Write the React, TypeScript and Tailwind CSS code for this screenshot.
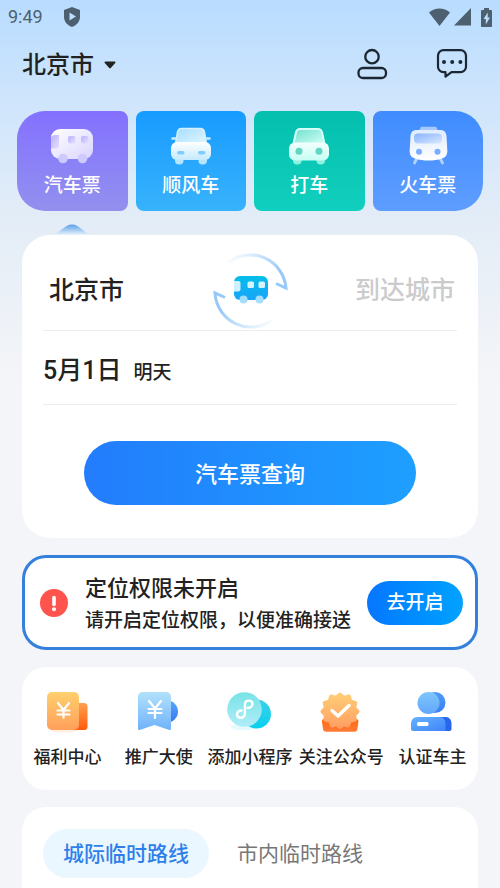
import { useState, type ReactNode } from 'react';

const rides = [
  { label: '汽车票', icon: <BusIcon />, className: 'from-[#8470ff] to-[#9290ee] rounded-l-[28px] rounded-r-lg' },
  { label: '顺风车', icon: <CarIcon />, className: 'from-[#169bff] to-[#37b2fb] rounded-lg' },
  { label: '打车', icon: <TaxiIcon />, className: 'from-[#04bfae] to-[#11cfbe] rounded-lg' },
  { label: '火车票', icon: <TrainIcon />, className: 'from-[#3f8cff] to-[#5e9dff] rounded-l-lg rounded-r-[28px]' },
];

const services = [
  { label: '福利中心', icon: <WelfareIcon /> },
  { label: '推广大使', icon: <AmbassadorIcon /> },
  { label: '添加小程序', icon: <MiniProgramIcon /> },
  { label: '关注公众号', icon: <FollowIcon /> },
  { label: '认证车主', icon: <DriverIcon /> },
];

const routeTabs = ['城际临时路线', '市内临时路线'];

export default function App() {
  const [ride, setRide] = useState(0);
  const [tab, setTab] = useState(0);

  return (
    <div className="flex min-h-screen flex-col bg-[#f4f5f8] bg-[linear-gradient(180deg,#b8dcff_0px,#cfe5fc_100px,#e4edf7_225px,#f4f5f8_380px)] font-['Roboto','Noto_Sans_CJK_SC',sans-serif] text-[#222]">
      <StatusBar />

      <header className="flex h-[60px] items-center justify-between pr-8 pl-[22px]">
        <button className="flex items-center gap-2.5 pt-0.5 text-2xl font-medium">
          北京市
          <svg className="h-2 w-3" viewBox="0 0 12 8" fill="currentColor">
            <path d="M1.5.5h9c1 0 1.3.9.7 1.6L7 6.7c-.6.7-1.4.7-2 0L.8 2.1C.2 1.4.5.5 1.5.5Z" />
          </svg>
        </button>
        <div className="flex items-center gap-12">
          <button aria-label="我的">
            <svg className="h-8 w-8" viewBox="0 0 32 32" fill="none" stroke="#1b2733" strokeWidth={2.3}>
              <circle cx="16" cy="8.7" r="6.7" />
              <rect x="2.5" y="20" width="27.5" height="10" rx="4.5" />
            </svg>
          </button>
          <button aria-label="消息">
            <svg className="h-8 w-8" viewBox="0 0 32 32" fill="none" stroke="#1b2733" strokeWidth={2.2} strokeLinejoin="round">
              <path d="M7.5 2.2h17A5.5 5.5 0 0 1 30 7.7v11a5.5 5.5 0 0 1-5.500 5.500H15.500L9.500 28.700v-4.500h-2A5.500 5.500 0 0 1 2 18.700v-11a5.500 5.500 0 0 1 5.500-5.500Z" />
              <g fill="#1b2733" stroke="none">
                <circle cx="8" cy="14" r="2" />
                <circle cx="16.2" cy="14" r="2" />
                <circle cx="24.4" cy="14" r="2" />
              </g>
            </svg>
          </button>
        </div>
      </header>

      <nav className="mt-[17px] grid grid-cols-4 gap-2 px-[17px]">
        {rides.map((item, i) => (
          <div key={item.label} className="relative">
            <button
              onClick={() => setRide(i)}
              className={`flex h-[100px] w-full flex-col items-center bg-linear-to-b pt-[15px] text-[19px] font-medium text-white ${item.className}`}
            >
              {item.icon}
              <span className="mt-1.5 leading-7">{item.label}</span>
            </button>
            {ride === i && (
              <svg className="absolute top-full left-1/2 mt-3 h-3 w-9 -translate-x-1/2" viewBox="0 0 36 12">
                <path d="M0 11C7 9 11 1.500 18 1.500S29 9 36 11Z" fill="url(#pointer)" />
                <Gradient id="pointer" from="#5b9fea" to="#dcebfa" />
              </svg>
            )}
          </div>
        ))}
      </nav>

      <main className="mt-6 flex grow flex-col gap-[17px] px-[22px]">
        <section className="rounded-[28px] bg-white px-[21px] pb-[33px]">
          <div className="flex h-24 items-center justify-between border-b border-[#ececec] pt-4">
            <button className="w-[110px] pl-1.5 text-left text-[25px] font-medium">北京市</button>
            <button aria-label="交换城市">
              <SwapIcon />
            </button>
            <button className="w-[110px] pr-0.5 text-right text-[25px] font-medium whitespace-nowrap text-[#cbcbcb]">
              到达城市
            </button>
          </div>
          <button className="flex h-[74px] w-full items-baseline gap-3 border-b border-[#ececec] pt-5 font-medium">
            <span className="text-[25px] leading-10">5月1日</span>
            <span className="text-[19px]">明天</span>
          </button>
          <button className="mx-auto mt-9 block h-16 w-4/5 rounded-full bg-linear-to-r from-[#237cfc] to-[#1e9fff] pt-0.5 text-[22px] font-medium text-white">
            汽车票查询
          </button>
        </section>

        <section className="flex h-[95px] items-center rounded-[24px] border-[3px] border-[#357fdd] bg-white pr-3 pl-[15px]">
          <svg className="h-7 w-7 shrink-0" viewBox="0 0 28 28">
            <circle cx="14" cy="14" r="14" fill="#ff544d" />
            <path d="M14 8.500v7" stroke="#fff" strokeWidth={3.6} strokeLinecap="round" />
            <circle cx="14" cy="20.3" r="2" fill="#fff" />
          </svg>
          <div className="ml-[17px] grow pt-1 whitespace-nowrap">
            <h2 className="text-[22px] leading-8 font-medium">定位权限未开启</h2>
            <p className="text-[19px] leading-8 font-medium">请开启定位权限，以便准确接送</p>
          </div>
          <button className="h-11 w-24 shrink-0 rounded-full bg-linear-to-r from-[#0876ff] to-[#04a2ff] pt-0.5 text-[19px] font-medium text-white">
            去开启
          </button>
        </section>

        <section className="grid grid-cols-5 rounded-[24px] bg-white pt-[22px] pb-5">
          {services.map((item) => (
            <button key={item.label} className="flex flex-col items-center text-[17px] font-medium whitespace-nowrap">
              {item.icon}
              <span className="mt-2.5 leading-[25px]">{item.label}</span>
            </button>
          ))}
        </section>

        <section className="grow rounded-t-[24px] bg-white px-[21px] pt-[22px] pb-2.5">
          <div className="flex gap-2">
            {routeTabs.map((label, i) => (
              <button
                key={label}
                onClick={() => setTab(i)}
                className={`h-[49px] rounded-full px-5 pt-0.5 text-[21px] ${
                  tab === i ? 'bg-[#ebf7ff] font-medium text-[#2f7fea]' : 'text-[#777]'
                }`}
              >
                {label}
              </button>
            ))}
          </div>
        </section>
      </main>
    </div>
  );
}

function StatusBar() {
  return (
    <div className="flex h-[34px] items-center px-2 text-lg text-[#4d6070]">
      <span>9:49</span>
      <svg className="ml-5 h-5 w-[18px]" viewBox="0 0 18 20" fill="currentColor">
        <path fillRule="evenodd" d="M9 0l8 3v7c0 4.500-3.500 8.500-8 10C4.500 18.500 1 14.500 1 10V3Zm-2.500 5.500v8l6.500-4Z" />
      </svg>
      <div className="ml-auto flex items-center gap-1">
        <svg className="h-[18px] w-[21px]" viewBox="0 0 21 18" fill="currentColor">
          <path d="M0 4.500C6-1 15-1 21 4.500L10.500 18Z" />
        </svg>
        <svg className="h-[18px] w-[17px]" viewBox="0 0 17 18" fill="currentColor">
          <path d="M17 0v17.500H0Z" />
        </svg>
        <svg className="ml-1.5 h-[19px] w-[11px]" viewBox="0 0 11 19" fill="currentColor">
          <path
            fillRule="evenodd"
            d="M3 0h5v2h2c.6 0 1 .4 1 1v15c0 .6-.4 1-1 1H1c-.6 0-1-.4-1-1V3c0-.6.4-1 1-1h2Zm3.700 4.500L2.500 11h2.300v5.500L9 9.500H6.700Z"
          />
        </svg>
      </div>
    </div>
  );
}

function Gradient({ id, from, to, diagonal = false }: { id: string; from: string; to: string; diagonal?: boolean }) {
  return (
    <defs>
      <linearGradient id={id} x1="0" y1="0" x2={diagonal ? 1 : 0} y2="1">
        <stop stopColor={from} />
        <stop offset="1" stopColor={to} />
      </linearGradient>
    </defs>
  );
}

function RideSvg({ children }: { children: ReactNode }) {
  return (
    <svg className="h-10 w-[50px] shrink-0" viewBox="0 0 50 40">
      {children}
    </svg>
  );
}

function BusIcon() {
  return (
    <RideSvg>
      <Gradient id="bus" from="#ffffff" to="#d9d4ff" diagonal />
      <Gradient id="busWindow" from="#b9b0fb" to="#e6e1ff" diagonal />
      <rect x="4" y="3" width="42" height="30" rx="9" fill="url(#bus)" />
      <path d="M4 13c0-3 2-4 4-4h4v11c0 1.500-1 2.500-2.500 2.500H4Z" fill="url(#busWindow)" />
      <rect x="21" y="10" width="7.5" height="7.5" rx="2" fill="url(#busWindow)" />
      <rect x="34" y="10" width="7.5" height="7.5" rx="2" fill="url(#busWindow)" />
      <circle cx="16" cy="32.5" r="4.8" fill="#cfcafd" />
      <circle cx="35.5" cy="32.5" r="4.8" fill="#cfcafd" />
    </RideSvg>
  );
}

function CarIcon() {
  return (
    <RideSvg>
      <Gradient id="carGlass" from="#a5deff" to="#e2f6ff" diagonal />
      <Gradient id="carBody" from="#ffffff" to="#c4eafe" />
      <path d="M6.500 12.500h5M38.500 12.500h5" stroke="#c5ebff" strokeWidth={2.6} strokeLinecap="round" />
      <path d="M9.500 18l2-12c.6-2.500 2-3.500 4-3.500h19c2 0 3.400 1 4 3.500l2 12Z" fill="url(#carGlass)" stroke="#d5f1ff" strokeWidth={1.5} />
      <rect x="9" y="28" width="8.5" height="10.5" rx="4" fill="#b5e5ff" />
      <rect x="32.5" y="28" width="8.5" height="10.5" rx="4" fill="#b5e5ff" />
      <rect x="5" y="16" width="40" height="18" rx="6" fill="url(#carBody)" />
      <rect x="11" y="25" width="7.5" height="3.6" rx="1.8" fill="#7dcdfa" />
      <rect x="32" y="25" width="7.5" height="3.6" rx="1.8" fill="#7dcdfa" />
    </RideSvg>
  );
}

function TaxiIcon() {
  return (
    <RideSvg>
      <Gradient id="taxiGlass" from="#6edfce" to="#d2fff5" diagonal />
      <Gradient id="taxiBody" from="#f4fffd" to="#c6fff4" />
      <path d="M9.500 18l2.300-11c.6-3 2.200-4 4.200-4h18c2 0 3.600 1 4.200 4l2.300 11Z" fill="url(#taxiGlass)" stroke="#d5fff8" strokeWidth={2} />
      <rect x="9" y="28" width="8.5" height="10.5" rx="4" fill="#8cf2df" />
      <rect x="32.5" y="28" width="8.5" height="10.5" rx="4" fill="#8cf2df" />
      <rect x="5" y="16.5" width="40" height="18" rx="6" fill="url(#taxiBody)" />
      <circle cx="15" cy="25.3" r="3.5" fill="#61d6c4" />
      <circle cx="35" cy="25.3" r="3.5" fill="#61d6c4" />
    </RideSvg>
  );
}

function TrainIcon() {
  return (
    <RideSvg>
      <Gradient id="train" from="#dfebff" to="#ffffff" />
      <Gradient id="trainGlass" from="#85b3ff" to="#dbe8ff" diagonal />
      <path d="M16 5l1.500-3.500c.3-.6.8-.8 1.500-.8h13c.7 0 1.200.2 1.500.8L35 5Z" fill="#a5c8ff" />
      <path d="M14 32l-2.500 5M37 32l2.500 5" stroke="#b4d0ff" strokeWidth={2.8} strokeLinecap="round" />
      <path d="M7.500 10c.4-4.500 3-6 6.500-6h23c3.500 0 6.100 1.500 6.500 6l.8 14c.3 5-1.800 7.500-5.300 8.500-8 2.700-19 2.700-27 0-3.500-1-5.600-3.500-5.300-8.500Z" fill="url(#train)" />
      <rect x="11" y="7.5" width="28" height="10" rx="4" fill="url(#trainGlass)" />
      <circle cx="16" cy="25.7" r="3" fill="#7aacff" />
      <circle cx="34.5" cy="25.7" r="3" fill="#7aacff" />
    </RideSvg>
  );
}

function SwapIcon() {
  return (
    <svg className="h-20 w-20" viewBox="0 0 80 80" fill="none">
      <defs>
        <linearGradient id="arcTop" x1="14" y1="4" x2="68" y2="26" gradientUnits="userSpaceOnUse">
          <stop stopColor="#b9ddfc" stopOpacity="0" />
          <stop offset="1" stopColor="#96c8f8" />
        </linearGradient>
        <linearGradient id="arcBottom" x1="66" y1="76" x2="12" y2="54" gradientUnits="userSpaceOnUse">
          <stop stopColor="#b9ddfc" stopOpacity="0" />
          <stop offset="1" stopColor="#96c8f8" />
        </linearGradient>
      </defs>
      <path d="M18 11.500A36 36 0 0 1 76 37L66 32.500" stroke="url(#arcTop)" strokeWidth={3} />
      <path d="M63 68.500A36 36 0 0 1 5 42L15 46.500" stroke="url(#arcBottom)" strokeWidth={3} />
      <Gradient id="swapBus" from="#04bee8" to="#18a4fb" />
      <rect x="24" y="25" width="34" height="24" rx="6" fill="url(#swapBus)" />
      <path d="M24 30h4.500c1.500 0 2 .8 2 2v6c0 1.500-.8 2.500-2.500 2.500h-4Z" fill="#cdf1ff" />
      <rect x="37.5" y="30.5" width="6.5" height="6.5" rx="1.5" fill="#d4f4ff" />
      <rect x="48.5" y="30.5" width="6.5" height="6.5" rx="1.5" fill="#d4f4ff" />
      <circle cx="33.5" cy="48.5" r="4" fill="#a3defc" />
      <circle cx="49.5" cy="48.5" r="4" fill="#a3defc" />
    </svg>
  );
}

function ServiceSvg({ children }: { children: ReactNode }) {
  return (
    <svg className="h-[46px] w-12" viewBox="0 0 48 46" fill="none">
      {children}
    </svg>
  );
}

function WelfareIcon() {
  return (
    <ServiceSvg>
      <Gradient id="welfareBack" from="#ffa052" to="#ff5a0a" />
      <Gradient id="welfare" from="#ffcf6e" to="#ff9f5b" />
      <ellipse cx="20" cy="41.5" rx="14" ry="2" fill="#fff0e3" />
      <rect x="26" y="14" width="17.5" height="27" rx="3.5" fill="url(#welfareBack)" />
      <rect x="3" y="3" width="32" height="38" rx="5" fill="url(#welfare)" />
      <path d="M14 14l5.500 7 5.500-7M19.500 21v8M13.500 21.500h12M13.500 25.500h12" stroke="#fff" strokeWidth={2.2} strokeLinecap="round" />
    </ServiceSvg>
  );
}

function AmbassadorIcon() {
  return (
    <ServiceSvg>
      <Gradient id="ambassadorBack" from="#5ba7ff" to="#3578f0" />
      <Gradient id="ambassador" from="#b2e1fb" to="#6fb2fb" />
      <circle cx="32" cy="22.5" r="11" fill="url(#ambassadorBack)" />
      <path d="M8 3h23c3 0 5 2 5 5v31.500c0 1.500-1 2-2.300 1.300L19.500 36 5.300 40.800C4 41.500 3 41 3 39.500V8c0-3 2-5 5-5Z" fill="url(#ambassador)" />
      <path d="M14 12l6 7.500 6-7.500M20 19.500v9.500M13.500 20h13M13.500 24h13" stroke="#fff" strokeWidth={2.2} strokeLinecap="round" />
    </ServiceSvg>
  );
}

function MiniProgramIcon() {
  return (
    <ServiceSvg>
      <Gradient id="miniBack" from="#3dd0ea" to="#08d0ef" />
      <Gradient id="mini" from="#77e3e6" to="#b0edf8" />
      <ellipse cx="17" cy="38" rx="12" ry="3.5" fill="#e6fafd" />
      <circle cx="30.5" cy="25" r="14.5" fill="url(#miniBack)" />
      <circle cx="18.5" cy="20.5" r="17.3" fill="url(#mini)" />
      <path
        d="M21.500 19c2.300 0 5-1.400 5-4 0-2-1.500-3.400-3.600-3.400-2.500 0-4 1.700-4 4v9c0 2.400-1.800 4.200-4.200 4.200-2.100 0-3.700-1.400-3.700-3.500 0-2.400 2.300-3.800 4.500-3.800"
        stroke="#fff"
        strokeWidth={2.4}
        strokeLinecap="round"
      />
    </ServiceSvg>
  );
}

function FollowIcon() {
  return (
    <ServiceSvg>
      <Gradient id="followBase" from="#ff6a13" to="#ff7a35" />
      <Gradient id="follow" from="#ffcd76" to="#ffa062" />
      <path d="M7 30h32c1.800 0 2.600 1 2.400 2.700l-1 7.300c-.2 1.700-1.300 2.700-3 2.700H9c-1.700 0-2.700-1-3-2.700l-1-7.300C4.800 31 5.500 30 7 30Z" fill="url(#followBase)" />
      <path
        d="M23 6.500l4 3.500 5-1.500 1.300 5 5 1.500-1.300 5 3.500 3.500-3.500 3.500.8 4.500-5 1.200L31 37.500l-4.500-1.500L23 39l-3.500-3L15 37.500l-1.800-4.800-5-1.200.8-4.500-3.500-3.500L9 20l-1.300-5 5-1.500 1.300-5 5 1.500Z"
        transform="translate(0 -1)"
        fill="url(#follow)"
        stroke="url(#follow)"
        strokeWidth={4}
        strokeLinejoin="round"
      />
      <path d="M15 21.500l6 5.500L32 16.500" stroke="#fff" strokeWidth={3.4} strokeLinecap="round" strokeLinejoin="round" />
    </ServiceSvg>
  );
}

function DriverIcon() {
  return (
    <ServiceSvg>
      <Gradient id="driverBack" from="#4d9bfb" to="#3b7fef" />
      <Gradient id="driverHead" from="#7fc6fc" to="#62a7fb" />
      <Gradient id="driverBody" from="#66b3fc" to="#3f84fb" diagonal />
      <circle cx="27" cy="13.5" r="10.5" fill="url(#driverBack)" />
      <circle cx="20.5" cy="14" r="11" fill="url(#driverHead)" />
      <path d="M30 28h8c3.500 0 5.500 3 5.500 7v5c0 1.300-.8 2-2 2H30Z" fill="#2866ef" />
      <path d="M9 28h23c3.500 0 5.500 3 5.500 7v7H5c-1.300 0-2-.8-2-2v-5c0-4 2.500-7 6-7Z" fill="url(#driverBody)" />
      <rect x="9" y="33" width="11.5" height="4" rx="1.5" fill="#fff" />
    </ServiceSvg>
  );
}
